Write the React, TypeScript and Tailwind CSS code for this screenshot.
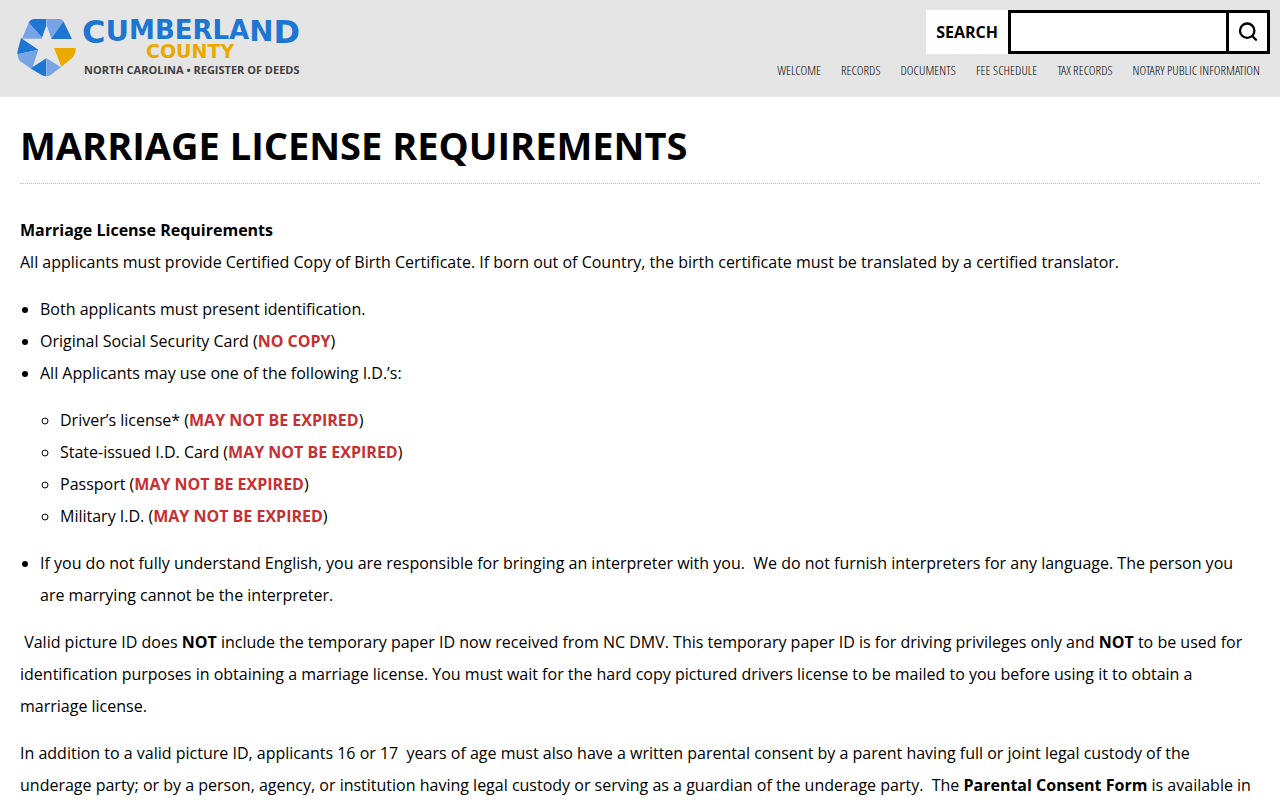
const navItems = [
  "Welcome",
  "Records",
  "Documents",
  "Fee Schedule",
  "Tax Records",
  "Notary Public Information",
];

const idTypes = ["Driver’s license*", "State-issued I.D. Card", "Passport", "Military I.D."];

function Alert({ children }: { children: string }) {
  return <strong className="font-bold text-[#c72f32]">{children}</strong>;
}

function Logo() {
  return (
    <svg viewBox="0 -6 300 72" className="h-[72px] w-[300px]" role="img" aria-label="Cumberland County Register of Deeds">
      <g transform="translate(-16 -16) scale(0.33333)">
        <path fill="#1c76d2" d="M86 68Q91 57 104 57H139V76L126 113Z" />
        <path fill="#78a4e6" d="M86 68L126 113V116H66Z" />
        <path fill="#78a4e6" d="M140 57H178Q187 57 190 64L154 115L140 76Z" />
        <path fill="#1c76d2" d="M190 64L216 117H153Z" />
        <path fill="#1c76d2" d="M63 114L115 149L53 163Q51 158 53 152Z" />
        <path fill="#78a4e6" d="M53 163L115 149L98 202L93 206L61 184Q54 178 53 163Z" />
        <path fill="#1c76d2" d="M93 206L98 201L139 175V229Q132 229 125 225Z" />
        <path fill="#78a4e6" d="M140 175L183 202L155 223Q148 229 140 229Z" />
        <path fill="#eba900" d="M162 144H227Q228 161 217 173L184 200Z" />
      </g>
      <text x="66" y="27" fill="#1c76d2" className="font-['DejaVu_Sans'] text-[26px] font-bold">
        <tspan className="text-[32px]">C</tspan>
        <tspan y="25" className="text-[29px]">U</tspan>
        <tspan y="23">MBERLA</tspan>
        <tspan y="25" className="text-[29px]">N</tspan>
        <tspan y="27" className="text-[32px]">D</tspan>
      </text>
      <text x="130" y="42" fill="#eba900" className="font-['DejaVu_Sans'] text-[19px] font-bold">COUNTY</text>
      <text x="68" y="58" fill="#40403e" className="font-['Open_Sans'] text-[11px] font-bold">
        NORTH CAROLINA • REGISTER OF DEEDS
      </text>
    </svg>
  );
}

function SearchIcon() {
  return (
    <svg viewBox="0 0 22 22" className="size-[22px]" fill="none" stroke="currentColor" strokeWidth="2.3" strokeLinecap="round">
      <circle cx="10.2" cy="9.7" r="7.2" />
      <path d="M15.3 15L19 18.8" />
    </svg>
  );
}

export default function App() {
  return (
    <div className="bg-white font-['Open_Sans',sans-serif] text-base leading-8 text-black">
      <header className="flex items-start justify-between bg-[#e5e5e5] pt-2.5 pb-[15px]">
        <a href="#home" className="ml-4">
          <Logo />
        </a>
        <div className="flex flex-col items-end">
          <form className="mr-2.5 flex h-11" onSubmit={(e) => e.preventDefault()}>
            <label htmlFor="q" className="flex items-center bg-white px-2.5 font-bold">
              SEARCH
            </label>
            <input id="q" type="search" className="w-[221px] border-3 border-black bg-white px-2 outline-none" />
            <button
              type="submit"
              aria-label="Search"
              className="-ml-[3px] flex w-11 items-center justify-center border-3 border-black bg-white"
            >
              <SearchIcon />
            </button>
          </form>
          <nav className="mr-5 flex gap-5 pt-[7px] font-['Open_Sans_Condensed_Light','Open_Sans_Light_Condensed','Open_Sans_Condensed',sans-serif] text-[13px] leading-[19px] font-light uppercase">
            {navItems.map((item) => (
              <a key={item} href="#nav">
                {item}
              </a>
            ))}
          </nav>
        </div>
      </header>

      <main className="px-5 pb-10">
        <h1 className="border-b border-dotted border-[#bbbbbb] pt-6 pb-3.5 text-[38px] leading-[48px] font-bold">
          MARRIAGE LICENSE REQUIREMENTS
        </h1>
        <p className="mt-[30px]">
          <strong className="font-bold">Marriage License Requirements</strong>
          <br />
          All applicants must provide Certified Copy of Birth Certificate. If born out of Country, the birth
          certificate must be translated by a certified translator.
        </p>
        <ul className="mt-[15px] list-disc pl-5">
          <li>Both applicants must present identification.</li>
          <li>
            Original Social Security Card (<Alert>NO COPY</Alert>)
          </li>
          <li>
            All Applicants may use one of the following I.D.’s:
            <ul className="my-[15px] list-[circle] pl-5">
              {idTypes.map((id) => (
                <li key={id}>
                  {id} (<Alert>MAY NOT BE EXPIRED</Alert>)
                </li>
              ))}
            </ul>
          </li>
          <li>
            If you do not fully understand English, you are responsible for bringing an interpreter with
            you.&nbsp; We do not furnish interpreters for any language. The person you are marrying cannot be
            the interpreter.
          </li>
        </ul>
        <p className="mt-[15px]">
          &nbsp;Valid picture ID does <strong className="font-bold">NOT</strong> include the temporary paper ID
          now received from NC DMV. This temporary paper ID is for driving privileges only and{" "}
          <strong className="font-bold">NOT</strong> to be used for identification purposes in obtaining a
          marriage license. You must wait for the hard copy pictured drivers license to be mailed to you before
          using it to obtain a marriage license.
        </p>
        <p className="mt-[15px]">
          In addition to a valid picture ID, applicants 16 or 17&nbsp; years of age must also have a written
          parental consent by a parent having full or joint legal custody of the underage party; or by a person,
          agency, or institution having legal custody or serving as a guardian of the underage party.&nbsp; The{" "}
          <strong className="font-bold">Parental Consent Form</strong> is available in
        </p>
      </main>
    </div>
  );
}
